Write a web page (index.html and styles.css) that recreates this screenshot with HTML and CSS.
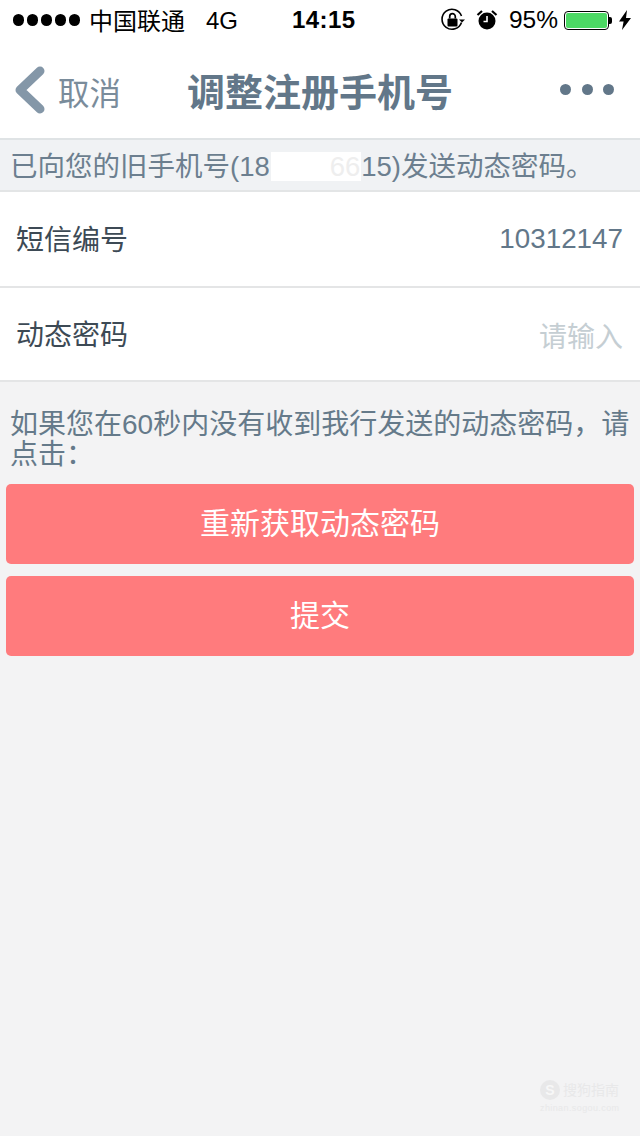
FILE: index.html
```html
<!DOCTYPE html>
<html lang="zh-CN">
<head>
<meta charset="utf-8">
<title>调整注册手机号</title>
<link rel="stylesheet" href="styles.css">
</head>
<body>
<div class="page">
  <header class="status">
    <div class="status-left">
      <div class="signal"><i></i><i></i><i></i><i></i><i></i></div>
      <span class="carrier">中国联通</span>
      <span class="net">4G</span>
    </div>
    <div class="clock">14:15</div>
    <div class="status-right">
      <svg class="ic-lock" width="24" height="24" viewBox="0 0 24 24"><path d="M20.5 14.5A10 10 0 1 1 20.5 8" fill="none" stroke="#000" stroke-width="1.6"/><path d="M18 11.5h6l-3 3z" fill="#000"/><rect x="6.5" y="10.5" width="10" height="8" rx="1" fill="#000"/><path d="M8.7 10.5V8.5a2.8 2.8 0 0 1 5.6 0v2" fill="none" stroke="#000" stroke-width="1.7"/></svg>
      <svg class="ic-alarm" width="22" height="22" viewBox="0 0 22 22"><circle cx="11" cy="12" r="8.5" fill="#000"/><path d="M11 7v5.5H7.5" fill="none" stroke="#fff" stroke-width="1.6"/><path d="M1.5 6 6 2M20.5 6 16 2" stroke="#000" stroke-width="2.2"/></svg>
      <span class="pct">95%</span>
      <div class="battery"><div class="battery-fill"></div></div>
      <div class="battery-cap"></div>
      <svg class="ic-bolt" width="12" height="20" viewBox="0 0 12 20"><path d="M8 0 0 11.5h4.6L3 20l9-12H7z" fill="#000"/></svg>
    </div>
  </header>

  <nav class="nav">
    <div class="nav-back">
      <svg width="32" height="48" viewBox="0 0 32 48"><path d="M26 5 6 24l20 19" fill="none" stroke="#8497a8" stroke-width="9" stroke-linecap="round" stroke-linejoin="round"/></svg>
      <span>取消</span>
    </div>
    <h1 class="nav-title">调整注册手机号</h1>
    <div class="nav-more"><i></i><i></i><i></i></div>
  </nav>

  <p class="notice">已向您的旧手机号(18<span class="redact">66</span>15)发送动态密码。</p>

  <section class="form">
    <div class="row"><span class="label">短信编号</span><span class="value">10312147</span></div>
    <div class="row"><span class="label">动态密码</span><span class="placeholder">请输入</span></div>
  </section>

  <p class="help">如果您在60秒内没有收到我行发送的动态密码，请点击：</p>

  <div class="actions">
    <button class="btn">重新获取动态密码</button>
    <button class="btn">提交</button>
  </div>

  <div class="watermark">
    <div class="wm-top"><b>S</b><span>搜狗指南</span></div>
    <div class="wm-url">zhinan.sogou.com</div>
  </div>
</div>
</body>
</html>
```
FILE: styles.css
```css
* { box-sizing: border-box; }
html, body { margin: 0; padding: 0; }
body {
  width: 640px;
  height: 1136px;
  overflow: hidden;
  background: #f3f3f4;
  font-family: "Liberation Sans", "Noto Sans CJK SC", sans-serif;
}
.page { position: relative; width: 640px; height: 1136px; display: flex; flex-direction: column; }

.status {
  height: 40px;
  background: #fff;
  display: flex;
  align-items: center;
  position: relative;
  color: #000;
  font-size: 24px;
  padding: 0 0 0 13px;
}
.status-left { display: flex; align-items: center; }
.signal { display: flex; gap: 2.5px; margin-right: 9px; }
.signal i { width: 11.4px; height: 11.4px; border-radius: 50%; background: #000; }
.carrier { margin-right: 21px; margin-bottom: 2px; }
.net { margin-top: 2px; }
.clock { position: absolute; left: 292px; top: 6px; font-weight: 700; font-size: 24px; letter-spacing: 0.4px; }
.status-right { margin-left: auto; display: flex; align-items: center; padding-right: 9px; }
.ic-lock { margin-right: 11px; }
.ic-alarm { margin-right: 11px; }
.pct { margin-right: 6px; font-size: 24.5px; }
.battery { width: 45px; height: 19px; border: 1px solid #000; border-radius: 4px; padding: 1px; background: #fff; }
.battery-fill { height: 100%; background: #4cd964; border-radius: 2px; }
.battery-cap { width: 3px; height: 7px; background: #000; border-radius: 0 2px 2px 0; margin-right: 7px; }

.nav {
  height: 100px;
  background: #fff;
  border-bottom: 2px solid #dfe3e5;
  position: relative;
  display: flex;
  align-items: center;
  justify-content: space-between;
  padding: 2px 26px 0 14px;
  color: #627789;
}
.nav-back { display: flex; align-items: center; gap: 12px; font-size: 31.5px; color: #7a8c9b; }
.nav-back span { margin-top: 2px; }
.nav-title { margin: 0; position: absolute; left: 0; right: 0; top: 3px; text-align: center; font-size: 38px; font-weight: 700; color: #627789; line-height: 100px; pointer-events: none; }
.nav-more { display: flex; gap: 10.5px; margin-top: -2px; }
.nav-more i { width: 11px; height: 11px; border-radius: 50%; background: #627789; }

.notice {
  margin: 0;
  height: 52px;
  padding: 0 0 0 10px;
  line-height: 53px;
  background: #f0f2f4;
  border-bottom: 2px solid #e3e5e6;
  font-size: 27.5px;
  color: #6c7f8f;
  white-space: nowrap;
}
.redact {
  display: inline-block;
  width: 90px;
  height: 29px;
  margin-left: 1.5px;
  line-height: 29px;
  background: #fff;
  color: #eeeeee;
  text-align: right;
  padding-right: 1px;
}

.form { background: #fff; }
.row {
  height: 96px;
  border-bottom: 2px solid #e4e5e6;
  display: flex;
  align-items: center;
  justify-content: space-between;
  padding: 0 17px 0 16px;
}
.row + .row { height: 94px; }
.label { font-size: 28px; color: #3d4a55; margin-bottom: 2px; }
.value { font-size: 27.8px; color: #627789; }
.placeholder { font-size: 28px; color: #c5ced3; margin-top: 2px; }

.help {
  margin: 0;
  padding: 28px 6px 0 10px;
  height: 102px;
  font-size: 28px;
  line-height: 30px;
  color: #657a8a;
}
.actions { display: flex; flex-direction: column; gap: 12px; padding: 0 6px; }
.btn {
  height: 80px;
  border: 0;
  border-radius: 5px;
  background: #ff7b7d;
  color: #fff;
  font: inherit;
  font-size: 30px;
  padding: 0 0 6px;
}

.watermark {
  position: absolute;
  left: 540px;
  top: 1080px;
  display: flex;
  flex-direction: column;
  gap: 3px;
  color: #e8e8e9;
}
.wm-top { display: flex; align-items: center; gap: 3px; font-size: 14px; line-height: 20px; }
.wm-top b {
  width: 20px;
  height: 20px;
  border-radius: 50%;
  background: #e8e8e9;
  color: #f7f7f7;
  text-align: center;
  line-height: 20px;
}
.wm-url { font-size: 9px; line-height: 10px; letter-spacing: 0.4px; white-space: nowrap; }
```
